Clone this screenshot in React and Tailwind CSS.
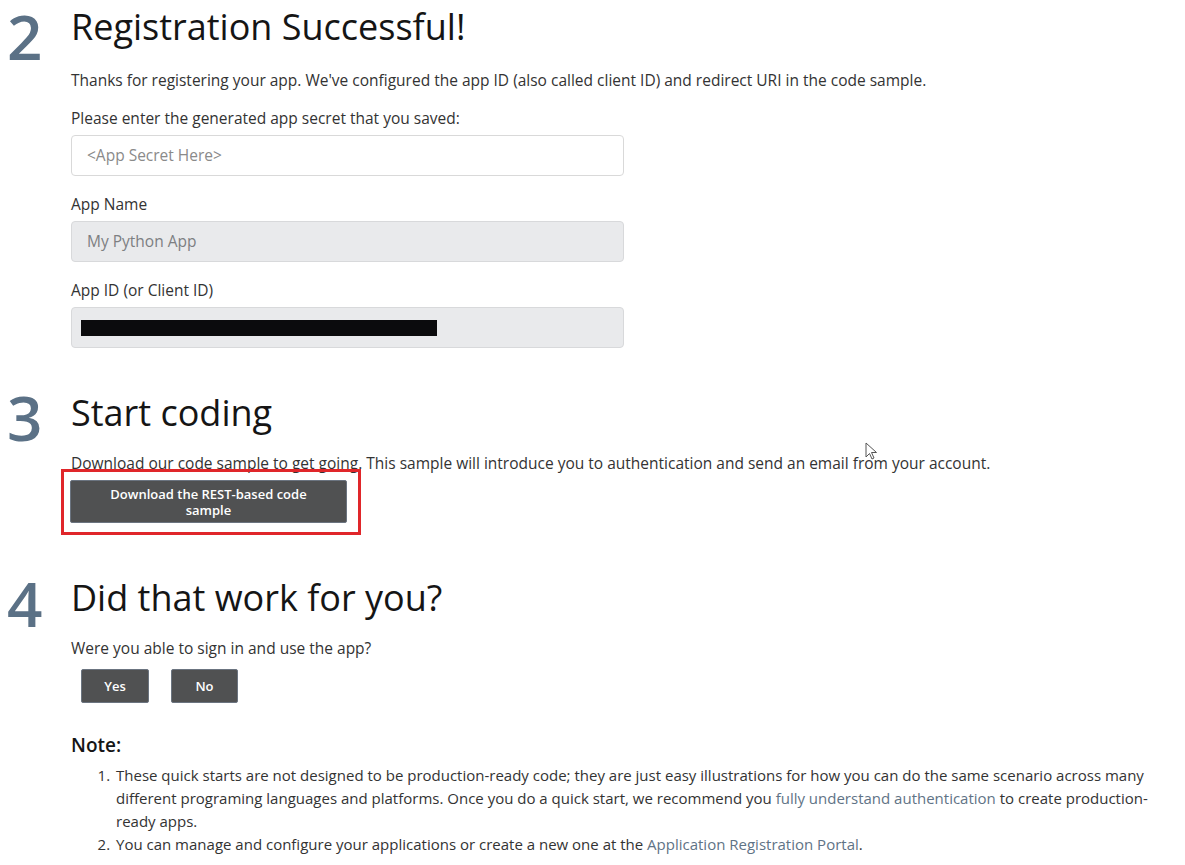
import React from "react";

const Step = ({ n, title, numTop, children }) => (
  <section className="flex">
    <div className={`w-[71px] shrink-0 pl-[7px] text-[62px] leading-[68px] font-semibold text-[#5b7186] ${numTop}`}>{n}</div>
    <div className="flex-1">
      <h2 className="text-[36px] leading-[50px] text-[#151515]">{title}</h2>
      {children}
    </div>
  </section>
);

const Field = ({ label, children, disabled }) => (
  <div>
    <div className="h-[26px] leading-[26px] text-[15.5px] text-[#333]">{label}</div>
    <div
      className={`mt-[4px] w-[553px] h-[41px] rounded-[4px] border flex items-center ${
        disabled ? "bg-[#e9eaec] border-[#d8d9db]" : "bg-white border-[#d9d9d9]"
      }`}
    >
      {children}
    </div>
  </div>
);

const DarkButton = ({ children, className }) => (
  <button className={`bg-[#505152] text-white font-semibold text-[13px] leading-[16px] rounded-[2px] border border-[#6b7480] ${className}`}>
    {children}
  </button>
);

export default function App() {
  return (
    <div className="relative bg-white w-[1185px] h-[865px] overflow-hidden text-[#333] font-['Open_Sans','Noto_Sans',sans-serif]">
      <div className="pt-[2px]">
        <Step n="2" title="Registration Successful!" numTop="mt-0">
          <p className="mt-[15px] text-[15.5px] leading-[26px]">
            Thanks for registering your app. We've configured the app ID (also called client ID) and redirect URI in the code sample.
          </p>
          <div className="mt-[12px]">
            <Field label="Please enter the generated app secret that you saved:">
              <span className="pl-[15px] text-[15.5px] text-[#8a8a8a]">&lt;App Secret Here&gt;</span>
            </Field>
          </div>
          <div className="mt-[15px]">
            <Field label="App Name" disabled>
              <span className="pl-[15px] text-[15.5px] text-[#7d7f82]">My Python App</span>
            </Field>
          </div>
          <div className="mt-[15px]">
            <Field label="App ID (or Client ID)" disabled>
              <span className="ml-[9px] block w-[356px] h-[16px] bg-[#0b0b0d]" />
            </Field>
          </div>
        </Step>
      </div>

      <div className="mt-[40px]">
        <Step n="3" title="Start coding" numTop="mt-[-5px]">
          <p className="mt-[14px] text-[15.5px] leading-[22px]">
            Download our code sample to get going. This sample will introduce you to authentication and send an email from your account.
          </p>
          <div className="ml-[-10px] mt-[-5px] inline-block border-[3px] border-[#e0262a] pl-[6px] pt-[8px] pr-[11px] pb-[9px]">
            <DarkButton className="w-[277px] h-[43px]">
              Download the REST-based code<br />sample
            </DarkButton>
          </div>
        </Step>
      </div>

      <div className="mt-[38px]">
        <Step n="4" title="Did that work for you?" numTop="mt-[-4px]">
          <p className="mt-[14px] text-[15.5px] leading-[22px]">Were you able to sign in and use the app?</p>
          <div className="mt-[10px] ml-[10px] flex gap-[22px]">
            <DarkButton className="w-[68px] h-[34px]">Yes</DarkButton>
            <DarkButton className="w-[67px] h-[34px]">No</DarkButton>
          </div>
          <h3 className="mt-[29px] text-[19px] leading-[26px] font-semibold text-[#151515]">Note:</h3>
          <ol className="mt-[6px] pl-[43px] list-decimal text-[15px] leading-[23px]">
            <li className="pl-[2px]">
              These quick starts are not designed to be production-ready code; they are just easy illustrations for how you can do the same scenario across many different programing languages and platforms. Once you do a quick start, we recommend you{" "}
              <span className="text-[#5f7386]">fully understand authentication</span> to create production-ready apps.
            </li>
            <li className="pl-[2px]">
              You can manage and configure your applications or create a new one at the{" "}
              <span className="text-[#5f7386]">Application Registration Portal</span>.
            </li>
          </ol>
        </Step>
      </div>

      <svg className="absolute left-[865px] top-[442px]" width="14" height="20" viewBox="0 0 14 20">
        <path d="M1 1 L1 15 L4.5 11.5 L7 17 L9 16 L6.5 10.5 L11.5 10.5 Z" fill="white" stroke="#555" strokeWidth="1" />
      </svg>
    </div>
  );
}
